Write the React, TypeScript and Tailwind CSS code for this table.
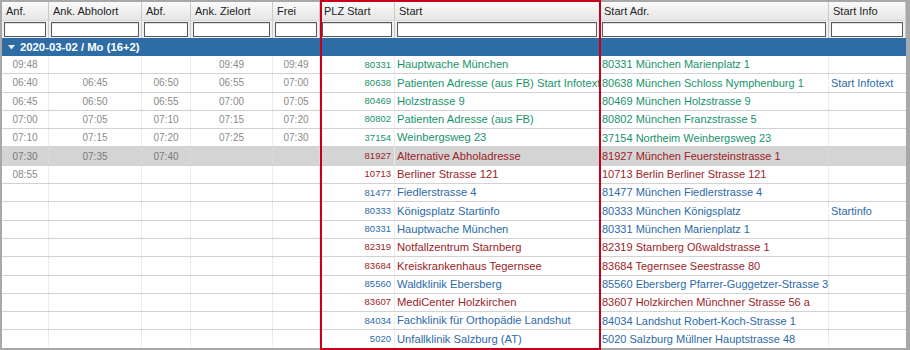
import React from 'react';

type Tone = 'green' | 'red' | 'blue';

interface Row {
  anf?: string;
  abhol?: string;
  abf?: string;
  ziel?: string;
  frei?: string;
  plz: string;
  start: string;
  adr: string;
  info?: string;
  tone: Tone;
  muted?: boolean;
}

const rows: Row[] = [
  { anf: '09:48', ziel: '09:49', frei: '09:49', plz: '80331', start: 'Hauptwache München', adr: '80331 München Marienplatz 1', tone: 'green' },
  { anf: '06:40', abhol: '06:45', abf: '06:50', ziel: '06:55', frei: '07:00', plz: '80638', start: 'Patienten Adresse (aus FB) Start Infotext', adr: '80638 München Schloss Nymphenburg 1', info: 'Start Infotext', tone: 'green' },
  { anf: '06:45', abhol: '06:50', abf: '06:55', ziel: '07:00', frei: '07:05', plz: '80469', start: 'Holzstrasse 9', adr: '80469 München Holzstrasse 9', tone: 'green' },
  { anf: '07:00', abhol: '07:05', abf: '07:10', ziel: '07:15', frei: '07:20', plz: '80802', start: 'Patienten Adresse (aus FB)', adr: '80802 München Franzstrasse 5', tone: 'green' },
  { anf: '07:10', abhol: '07:15', abf: '07:20', ziel: '07:25', frei: '07:30', plz: '37154', start: 'Weinbergsweg 23', adr: '37154 Northeim Weinbergsweg 23', tone: 'green' },
  { anf: '07:30', abhol: '07:35', abf: '07:40', plz: '81927', start: 'Alternative Abholadresse', adr: '81927 München Feuersteinstrasse 1', tone: 'red', muted: true },
  { anf: '08:55', plz: '10713', start: 'Berliner Strasse 121', adr: '10713 Berlin Berliner Strasse 121', tone: 'red' },
  { plz: '81477', start: 'Fiedlerstrasse 4', adr: '81477 München Fiedlerstrasse 4', tone: 'blue' },
  { plz: '80333', start: 'Königsplatz Startinfo', adr: '80333 München Königsplatz', info: 'Startinfo', tone: 'blue' },
  { plz: '80331', start: 'Hauptwache München', adr: '80331 München Marienplatz 1', tone: 'blue' },
  { plz: '82319', start: 'Notfallzentrum Starnberg', adr: '82319 Starnberg Oßwaldstrasse 1', tone: 'red' },
  { plz: '83684', start: 'Kreiskrankenhaus Tegernsee', adr: '83684 Tegernsee Seestrasse 80', tone: 'red' },
  { plz: '85560', start: 'Waldklinik Ebersberg', adr: '85560 Ebersberg Pfarrer-Guggetzer-Strasse 3', tone: 'blue' },
  { plz: '83607', start: 'MediCenter Holzkirchen', adr: '83607 Holzkirchen Münchner Strasse 56 a', tone: 'red' },
  { plz: '84034', start: 'Fachklinik für Orthopädie Landshut', adr: '84034 Landshut Robert-Koch-Strasse 1', tone: 'blue' },
  { plz: '5020', start: 'Unfallklinik Salzburg (AT)', adr: '5020 Salzburg Müllner Hauptstrasse 48', tone: 'blue' },
];

const columns = ['Anf.', 'Ank. Abholort', 'Abf.', 'Ank. Zielort', 'Frei', 'PLZ Start', 'Start', 'Start Adr.', 'Start Info'];

const toneClass: Record<Tone, string> = {
  green: 'text-[#17936a]',
  red: 'text-[#9c2327]',
  blue: 'text-[#2c6aa8]',
};

const gridCols = 'grid grid-cols-[47px_93px_49px_82px_47px_75px_205px_229px_77px]';

function TimeCell({ value, muted }: { value?: string; muted?: boolean }) {
  return (
    <div className={`flex items-center justify-center border-r border-dotted border-[#dcdcdc] text-[10px] ${muted ? 'text-[#7a7a7a]' : 'text-[#8a8a8a]'}`}>
      {value}
    </div>
  );
}

export default function App() {
  return (
    <div
      className="relative w-[910px] h-[350px] bg-[#a8a8a8] pt-[2px] pl-[2px] pr-[4px] pb-[2px] overflow-hidden"
      style={{ fontFamily: '"Liberation Sans", Arial, sans-serif' }}
    >
      <div className="w-[904px] h-[346px] bg-white overflow-hidden">
        {/* Header */}
        <div className={`${gridCols} h-[18px] bg-gradient-to-b from-[#fafafa] to-[#e6e6e6]`}>
          {columns.map((col) => (
            <div key={col} className="flex items-center px-[4px] text-[11px] text-[#222] border-r border-[#c9c9c9] whitespace-nowrap">
              {col}
            </div>
          ))}
        </div>

        {/* Filters */}
        <div className={`${gridCols} h-[18px] bg-[#efefef] border-t border-[#d8d8d8]`}>
          {columns.map((col) => (
            <div key={col} className="flex items-center px-[2px] border-r border-[#c9c9c9]">
              <div className="w-full h-[15px] bg-white border border-[#5a5a5a] shadow-[inset_0_1px_1px_rgba(0,0,0,0.15)]" />
            </div>
          ))}
        </div>

        {/* Group */}
        <div className="flex items-center h-[18px] bg-[#2e6ca6] text-white font-bold text-[11.3px] pl-[6px] gap-[5px]">
          <svg width="7" height="5" viewBox="0 0 7 5">
            <path d="M0 0 L7 0 L3.5 4.5 Z" fill="#e8eef6" />
          </svg>
          <span>2020-03-02 / Mo (16+2)</span>
        </div>

        {/* Rows */}
        {rows.map((r, i) => (
          <div
            key={i}
            className={`${gridCols} h-[18.3px] border-b border-[#d2d2d2] ${r.muted ? 'bg-[#d4d4d4]' : 'bg-white'}`}
          >
            <TimeCell value={r.anf} muted={r.muted} />
            <TimeCell value={r.abhol} muted={r.muted} />
            <TimeCell value={r.abf} muted={r.muted} />
            <TimeCell value={r.ziel} muted={r.muted} />
            <TimeCell value={r.frei} muted={r.muted} />
            <div className={`flex items-center justify-end pr-[3px] text-[9.5px] border-r border-[#ececec] ${toneClass[r.tone]}`}>
              {r.plz}
            </div>
            <div className={`flex items-center pl-[2px] text-[11.2px] whitespace-nowrap overflow-hidden border-r border-dotted border-[#dcdcdc] ${toneClass[r.tone]}`}>
              {r.start}
            </div>
            <div className={`flex items-center pl-[2px] text-[11px] whitespace-nowrap overflow-hidden border-r border-dotted border-[#dcdcdc] ${toneClass[r.tone]}`}>
              {r.adr}
            </div>
            <div className="flex items-center pl-[2px] text-[11px] whitespace-nowrap overflow-hidden text-[#2c6aa8]">
              {r.info}
            </div>
          </div>
        ))}
      </div>

      {/* Highlight frame */}
      <div className="absolute left-[320px] top-0 w-[281px] h-[350px] border-2 border-[#c4001a] pointer-events-none" />
    </div>
  );
}
